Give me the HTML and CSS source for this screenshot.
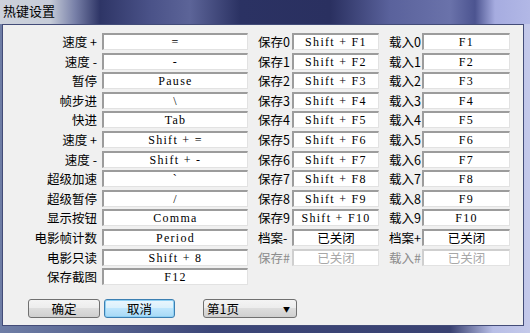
FILE: index.html
```html
<!DOCTYPE html>
<html lang="zh-CN">
<head>
    <meta charset="UTF-8">
    <title>热键设置</title>
    <link rel="stylesheet" href="styles.css">
</head>
<body>
    <div class="window">
        <div class="titlebar">热键设置</div>
        <div class="client">
            <div class="grid">
                <span class="lbl r">速度 +</span><span class="key">=</span>
                <span class="lbl">保存0</span><span class="key">Shift + F1</span>
                <span class="lbl">载入0</span><span class="key">F1</span>

                <span class="lbl r">速度 -</span><span class="key">-</span>
                <span class="lbl">保存1</span><span class="key">Shift + F2</span>
                <span class="lbl">载入1</span><span class="key">F2</span>

                <span class="lbl r">暂停</span><span class="key">Pause</span>
                <span class="lbl">保存2</span><span class="key">Shift + F3</span>
                <span class="lbl">载入2</span><span class="key">F3</span>

                <span class="lbl r">帧步进</span><span class="key">\</span>
                <span class="lbl">保存3</span><span class="key">Shift + F4</span>
                <span class="lbl">载入3</span><span class="key">F4</span>

                <span class="lbl r">快进</span><span class="key">Tab</span>
                <span class="lbl">保存4</span><span class="key">Shift + F5</span>
                <span class="lbl">载入4</span><span class="key">F5</span>

                <span class="lbl r">速度 +</span><span class="key">Shift + =</span>
                <span class="lbl">保存5</span><span class="key">Shift + F6</span>
                <span class="lbl">载入5</span><span class="key">F6</span>

                <span class="lbl r">速度 -</span><span class="key">Shift + -</span>
                <span class="lbl">保存6</span><span class="key">Shift + F7</span>
                <span class="lbl">载入6</span><span class="key">F7</span>

                <span class="lbl r">超级加速</span><span class="key">`</span>
                <span class="lbl">保存7</span><span class="key">Shift + F8</span>
                <span class="lbl">载入7</span><span class="key">F8</span>

                <span class="lbl r">超级暂停</span><span class="key">/</span>
                <span class="lbl">保存8</span><span class="key">Shift + F9</span>
                <span class="lbl">载入8</span><span class="key">F9</span>

                <span class="lbl r">显示按钮</span><span class="key">Comma</span>
                <span class="lbl">保存9</span><span class="key">Shift + F10</span>
                <span class="lbl">载入9</span><span class="key">F10</span>

                <span class="lbl r">电影帧计数</span><span class="key">Period</span>
                <span class="lbl">档案-</span><span class="key cn">已关闭</span>
                <span class="lbl">档案+</span><span class="key cn">已关闭</span>

                <span class="lbl r">电影只读</span><span class="key">Shift + 8</span>
                <span class="lbl off">保存#</span><span class="key cn off">已关闭</span>
                <span class="lbl off">载入#</span><span class="key cn off">已关闭</span>

                <span class="lbl r">保存截图</span><span class="key">F12</span>
            </div>
            <div class="footer">
                <button class="btn">确定</button>
                <button class="btn focus">取消</button>
                <div class="combo">第1页<span class="arrow">▼</span></div>
            </div>
        </div>
    </div>
</body>
</html>
```

FILE: styles.css
```css
body { margin: 0; width: 530px; height: 333px; overflow: hidden; font-family: "Noto Sans CJK SC", sans-serif; }
.window { width: 530px; height: 333px; background: linear-gradient(90deg, #6f7ea6 0, #3c4678 40%, #3a4272 85%, #b8bee6 93%, #c4c9ea 100%); }
.titlebar { height: 24px; padding-left: 3px; font-size: 13px; line-height: 22px; color: #000;
    background: linear-gradient(90deg, #cdd2dc 0, #c6ccd8 50px, #7880a8 75px, #2e3566 100px, #4a5288 150px, #5c6498 190px, #2b3263 240px, #2a3060 330px, #5a629c 390px, #6a72aa 450px, #4c5490 475px, #a6ace0 495px, #b2b8e6 530px); }
.client { margin: 0 6px 0 2px; height: 302px; border: 1px solid #434c78; background: #f0f0f0; box-sizing: border-box; }
.grid { display: grid; grid-template-columns: 99px 146px 44px 87px 43px 88px; grid-auto-rows: 17px; row-gap: 2.6px; padding: 8px 0 0 0; }
.lbl { font-size: 12.5px; line-height: 17px; color: #000; white-space: nowrap; padding-left: 10px; }
.lbl.r { text-align: right; padding: 0 5px 0 0; }
.lbl.off { color: #8c8c8c; }
.key { background: #fff; border-top: 2px solid #9c9c9c; border-left: 2px solid #9c9c9c; border-right: 1px solid #e2e2e2; border-bottom: 1px solid #e2e2e2;
    font-family: "Liberation Serif", serif; font-size: 12px; letter-spacing: 1.3px; line-height: 14px; text-align: center; color: #000; white-space: pre; }
.key.cn { font-family: "Noto Sans CJK SC", sans-serif; font-size: 12.5px; letter-spacing: 0; }
.key.off { color: #a8a8a8; border-top-color: #cfcfcf; border-left-color: #cfcfcf; }
.footer { display: flex; align-items: center; padding: 14px 0 0 25px; }
.btn { width: 72px; height: 19px; padding: 0; margin-right: 4px; border: 1px solid #707070; border-radius: 3px; font-family: "Noto Sans CJK SC", sans-serif; font-size: 12.5px; line-height: 15px; color: #000;
    background: linear-gradient(#f4f4f4, #ececec 50%, #dddddd 50%, #cfcfcf); }
.btn.focus { width: 71px; border-color: #3c7fb1; box-shadow: inset 0 0 0 1px #8ed0f4; background: linear-gradient(#eaf6fd, #d9f0fc 50%, #bee6fd 50%, #a7d9f5); }
.combo { margin-left: 24px; width: 89px; height: 17px; border: 1px solid #707070; border-radius: 3px; position: relative; font-size: 12.5px; line-height: 17px; padding-left: 3px; box-sizing: content-box;
    background: linear-gradient(#f4f4f4, #ececec 50%, #dddddd 50%, #cfcfcf); }
.arrow { position: absolute; right: 6px; top: 0; font-size: 7px; line-height: 18px; }
```
